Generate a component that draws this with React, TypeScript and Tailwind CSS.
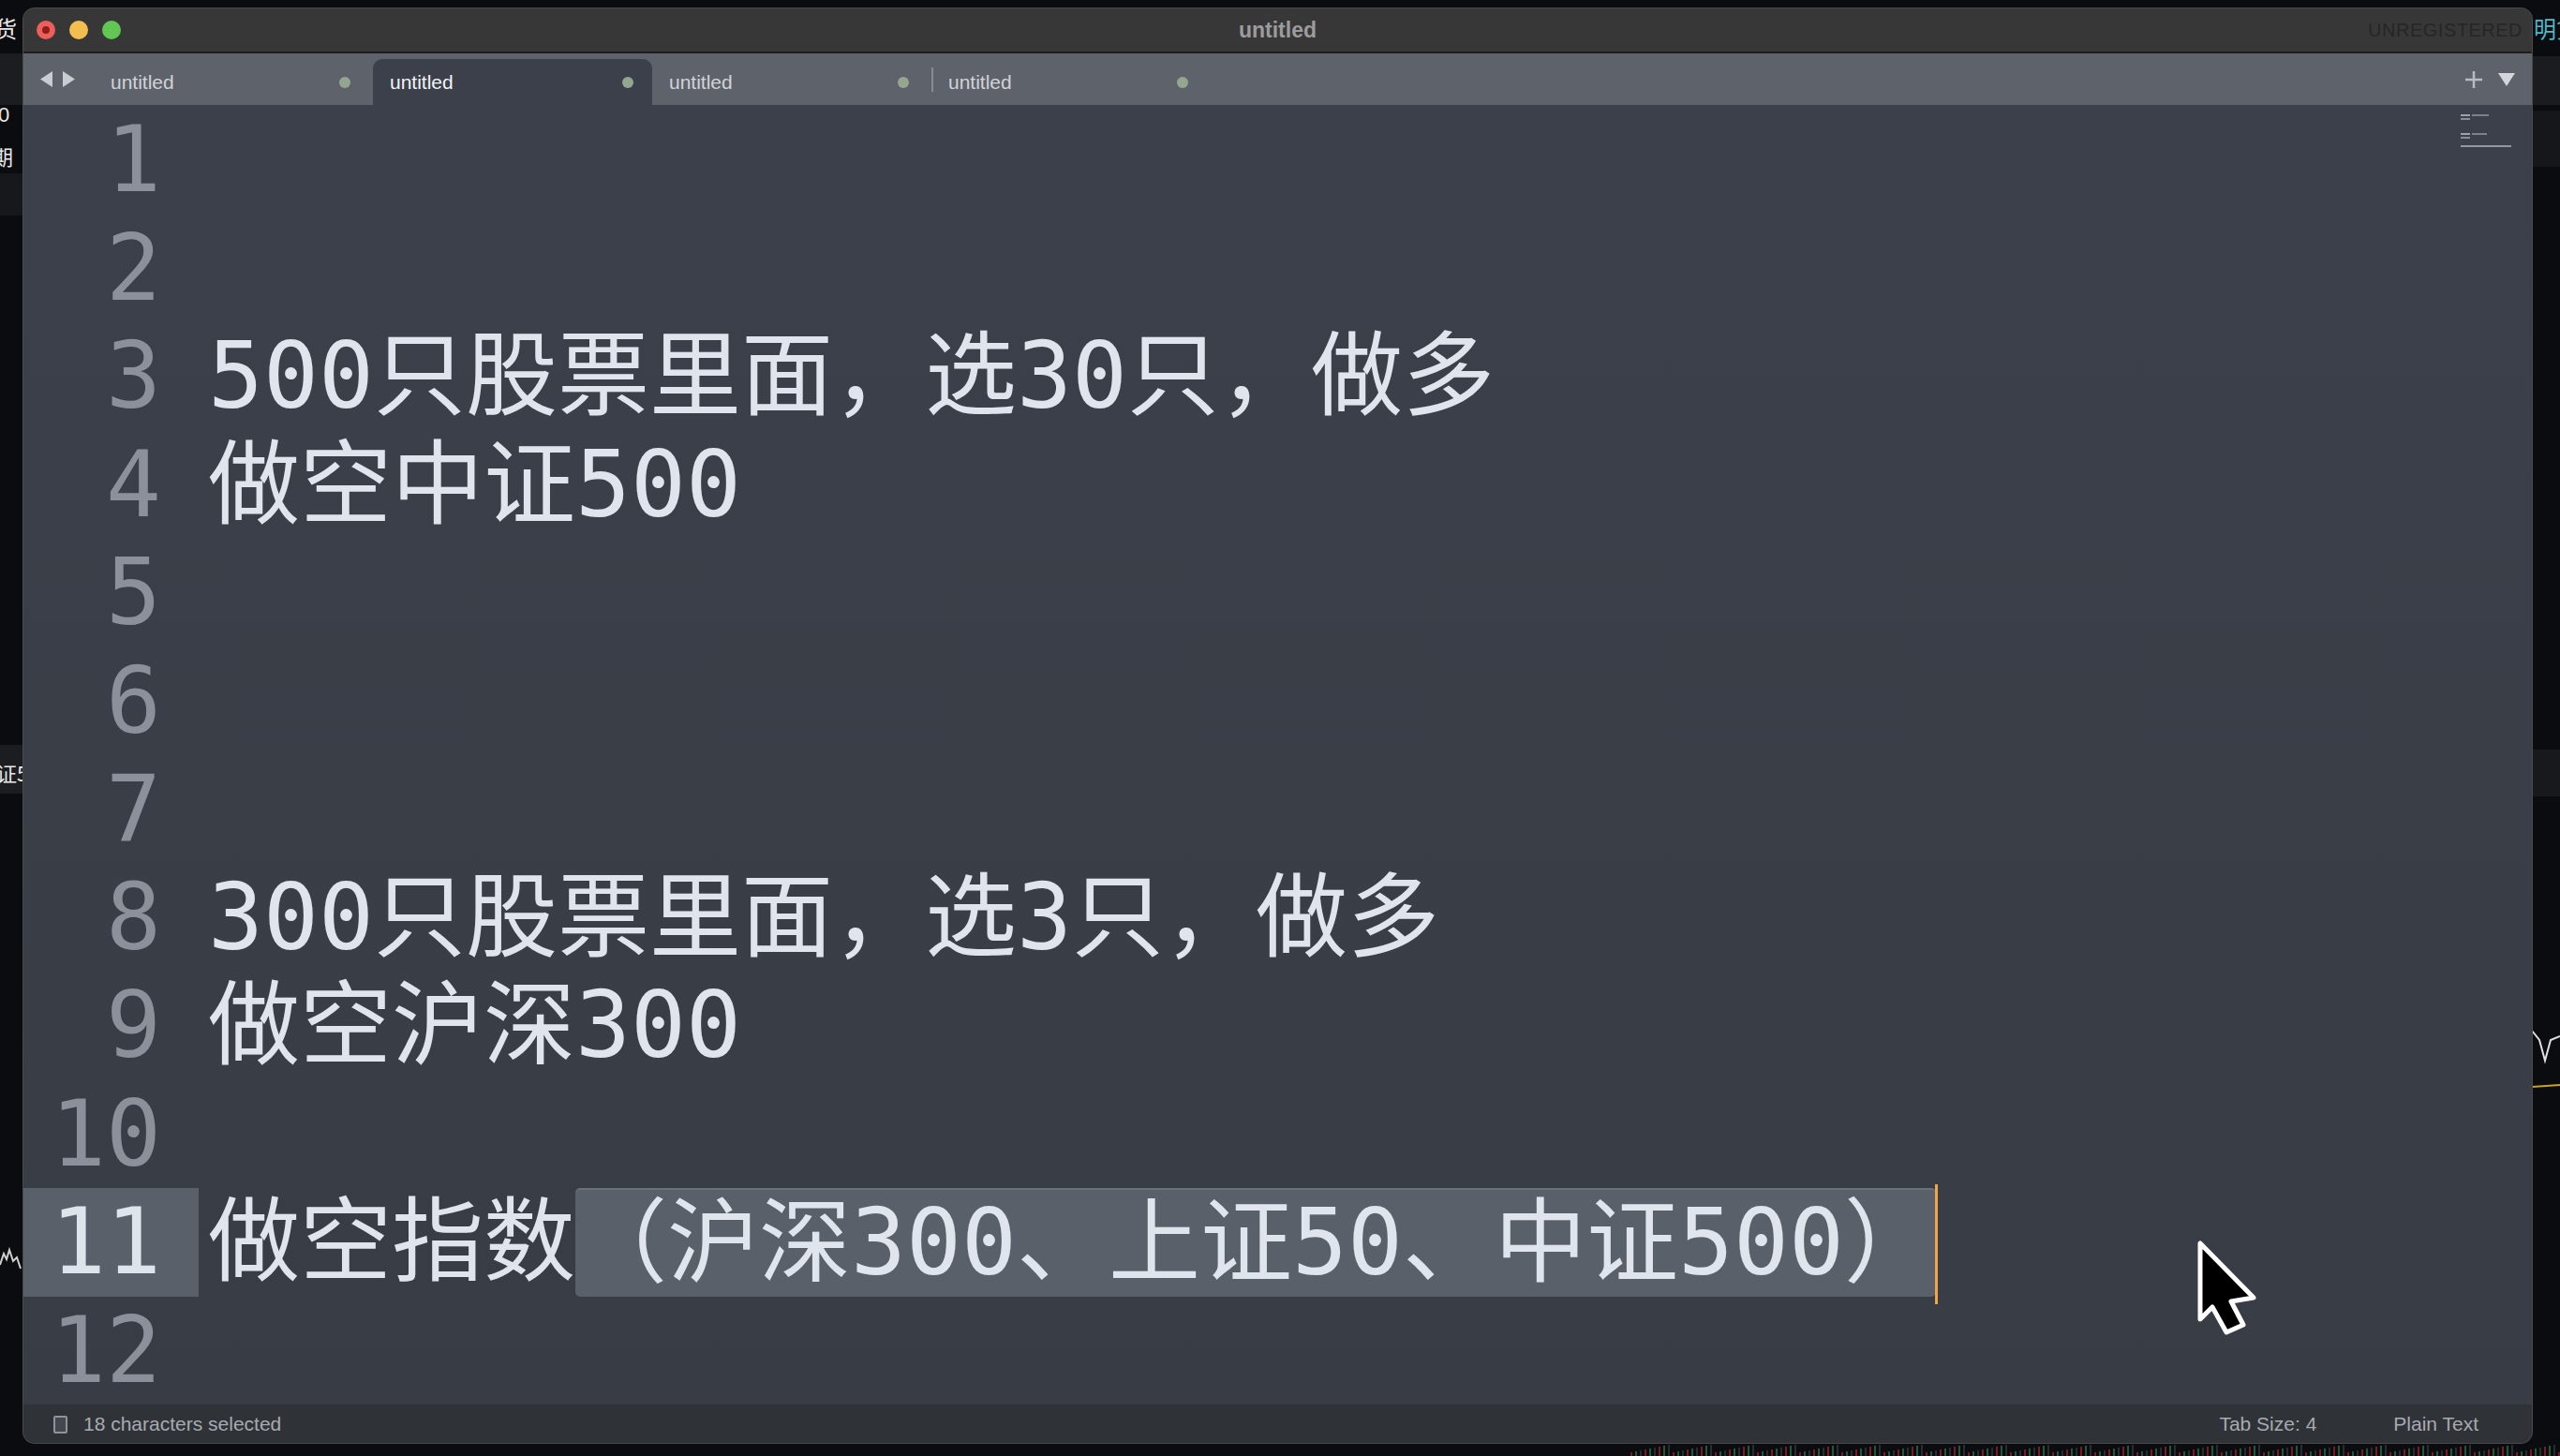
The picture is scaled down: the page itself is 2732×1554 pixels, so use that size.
import React from "react";

const mono = { fontFamily: '"DejaVu Sans Mono", "Noto Sans CJK SC", monospace' };
const ui = { fontFamily: '"Liberation Sans", Arial, "Noto Sans CJK SC", sans-serif' };
const cjk = { fontFamily: '"Noto Sans CJK SC", sans-serif' };

const lines: { n: number; text: string; sel?: string }[] = [
  { n: 1, text: "" },
  { n: 2, text: "" },
  { n: 3, text: "500只股票里面，选30只，做多" },
  { n: 4, text: "做空中证500" },
  { n: 5, text: "" },
  { n: 6, text: "" },
  { n: 7, text: "" },
  { n: 8, text: "300只股票里面，选3只，做多" },
  { n: 9, text: "做空沪深300" },
  { n: 10, text: "" },
  { n: 11, text: "做空指数", sel: "（沪深300、上证50、中证500）" },
  { n: 12, text: "" },
];

function Tab({ active, sep }: { active?: boolean; sep?: boolean }) {
  return (
    <div className="relative w-[298px] h-full flex items-end">
      {sep && <div className="absolute left-0 top-[15px] h-[26px] w-[2px] bg-[#868c94]" />}
      <div
        className={
          active
            ? "w-full h-[49px] bg-[#3b404a] rounded-t-[10px] flex items-center justify-between pl-[18px] pr-[20px]"
            : "w-full h-[49px] flex items-center justify-between pl-[18px] pr-[24px]"
        }
      >
        <span className={active ? "text-[21px] text-[#f2f4f7]" : "text-[21px] text-[#d0d3d8]"}>untitled</span>
        <span className="w-[12px] h-[12px] rounded-full bg-[#94a68f]" />
      </div>
    </div>
  );
}

export default function App() {
  return (
    <div className="relative w-[2732px] h-[1554px] overflow-hidden bg-[#0b0c0f]" style={ui}>
      {/* desktop content behind the window */}
      <div className="absolute left-0 top-[57px] w-[30px] h-[55px] bg-[#1b1d21]" />
      <div className="absolute left-0 top-[185px] w-[30px] h-[45px] bg-[#16181c]" />
      <div className="absolute left-[-6px] top-[12px] text-[24px] text-[#e8e8e8] whitespace-nowrap" style={cjk}>货</div>
      <div className="absolute left-[-2px] top-[106px] text-[22px] text-[#e8e8e8]">0</div>
      <div className="absolute left-[-8px] top-[150px] text-[22px] text-[#e8e8e8] whitespace-nowrap" style={cjk}>期</div>
      <div className="absolute left-0 top-[795px] w-[30px] h-[52px] bg-[#1b1d21]" />
      <div className="absolute left-[-4px] top-[808px] text-[22px] text-[#e8e8e8] whitespace-nowrap" style={cjk}>证5</div>
      <svg className="absolute left-0 top-[1320px]" width="26" height="40" viewBox="0 0 26 40">
        <path d="M0 30 L4 18 L7 24 L10 14 L14 26 L18 22 L22 34" stroke="#cfcfcf" strokeWidth="2" fill="none" />
      </svg>
      <div className="absolute left-[2702px] top-[60px] w-[30px] h-[52px] bg-[#1a1c20]" />
      <div className="absolute left-[2702px] top-[118px] w-[30px] h-[60px] bg-[#15171b]" />
      <div className="absolute left-[2704px] top-[12px] text-[24px] text-[#4fb8c8] whitespace-nowrap" style={cjk}>明货</div>
      <div className="absolute left-[2702px] top-[800px] w-[30px] h-[50px] bg-[#17191d]" />
      <svg className="absolute left-[2702px] top-[1080px]" width="30" height="90" viewBox="0 0 30 90">
        <path d="M0 20 L8 30 L14 52 L20 30 L30 26" stroke="#e0e0e0" strokeWidth="2" fill="none" />
        <path d="M0 80 L30 78" stroke="#c9a227" strokeWidth="2" fill="none" />
      </svg>
      <div className="absolute left-[1740px] top-[1542px] w-[1000px] h-[12px] flex items-end gap-[3px]">
        {Array.from({ length: 200 }).map((_, i) => (
          <div
            key={i}
            className="w-[2px]"
            style={{
              height: `${4 + ((i * 37) % 9)}px`,
              background: i % 3 === 0 ? "#7a1c22" : i % 3 === 1 ? "#1f5a3a" : "#2a2c30",
            }}
          />
        ))}
      </div>

      {/* window */}
      <div className="absolute left-[25px] top-[9px] w-[2677px] h-[1531px] rounded-[12px] overflow-hidden flex flex-col bg-[#3b404a] shadow-[0_0_0_1px_#4a4a4a]">
        {/* title bar */}
        <div className="relative h-[48px] shrink-0 bg-[#373737] border-b-2 border-[#1e1e1e] flex items-center">
          <div className="flex items-center gap-[15px] pl-[14px]">
            <span className="w-[20px] h-[20px] rounded-full bg-[#ec5f5a] flex items-center justify-center">
              <span className="w-[8px] h-[8px] rounded-full bg-[#8d1e1a]" />
            </span>
            <span className="w-[20px] h-[20px] rounded-full bg-[#f3be4f]" />
            <span className="w-[20px] h-[20px] rounded-full bg-[#62c655]" />
          </div>
          <div className="absolute inset-0 flex items-center justify-center pointer-events-none">
            <span className="text-[23px] font-bold text-[#9c9c9c]">untitled</span>
          </div>
          <div className="ml-auto pr-[10px] text-[20px] text-[#262626] tracking-[0.5px]">UNREGISTERED</div>
        </div>

        {/* tab bar */}
        <div className="h-[55px] shrink-0 bg-[#5e636b] flex items-stretch">
          <div className="w-[75px] flex items-center pl-[18px] gap-[11px]">
            <svg width="13" height="17" viewBox="0 0 13 17"><path d="M13 0 L0 8.5 L13 17 Z" fill="#c9ccd1" /></svg>
            <svg width="13" height="17" viewBox="0 0 13 17"><path d="M0 0 L13 8.5 L0 17 Z" fill="#c9ccd1" /></svg>
          </div>
          <Tab />
          <Tab active />
          <Tab />
          <Tab sep />
          <div className="ml-auto flex items-center gap-[16px] pr-[18px]">
            <svg width="20" height="20" viewBox="0 0 20 20"><path d="M10 1 V19 M1 10 H19" stroke="#b9bdc3" strokeWidth="2.5" /></svg>
            <svg width="18" height="14" viewBox="0 0 18 14"><path d="M0 0 H18 L9 14 Z" fill="#d3d6db" /></svg>
          </div>
        </div>

        {/* editor */}
        <div className="relative flex-1 bg-gradient-to-b from-[#3b404a] to-[#373c45] pt-[1px]" style={mono}>
          {lines.map((l) => {
            const cur = l.n === 11;
            return (
              <div key={l.n} className="flex h-[115.5px] items-stretch whitespace-pre">
                <div
                  className={
                    cur
                      ? "w-[187px] shrink-0 bg-[#59606a] text-right pr-[40px] text-[98px] leading-[115.5px] text-[#dfe3ea]"
                      : "w-[187px] shrink-0 text-right pr-[40px] text-[98px] leading-[115.5px] text-[#8b909a]"
                  }
                >
                  {l.n}
                </div>
                <div className="pl-[10px] text-[98px] leading-[115.5px] text-[#e0e4ec] flex items-stretch">
                  <span>{l.text}</span>
                  {l.sel && (
                    <span className="relative bg-[#5a606a] rounded-[5px] border-t-2 border-[#6b717b] leading-[113px]">
                      {l.sel}
                      <span className="absolute right-[-2px] top-[-6px] w-[3px] h-[128px] bg-[#f0a54a]" />
                    </span>
                  )}
                </div>
              </div>
            );
          })}

          {/* minimap */}
          <div className="absolute right-[22px] top-[10px] w-[54px] flex flex-col gap-[2px] opacity-80">
            <div className="flex gap-[2px]"><div className="w-[10px] h-[2px] bg-[#b5bac2]" /><div className="w-[18px] h-[2px] bg-[#8d939c]" /></div>
            <div className="w-[10px] h-[2px] bg-[#9ca1a9]" />
            <div className="h-[10px]" />
            <div className="flex gap-[2px]"><div className="w-[10px] h-[2px] bg-[#b5bac2]" /><div className="w-[16px] h-[2px] bg-[#8d939c]" /></div>
            <div className="w-[10px] h-[2px] bg-[#9ca1a9]" />
            <div className="h-[3px]" />
            <div className="w-[54px] h-[2px] bg-[#aab0b8]" />
          </div>

          {/* mouse cursor */}
          <svg className="absolute left-[2318px] top-[1210px]" width="70" height="105" viewBox="-5 -5 70 105">
            <path
              d="M0 0 L0 81 L13 68 L28 95 L46 87 L33 62 L57 58 Z"
              fill="#000"
              stroke="#fff"
              strokeWidth="5"
              strokeLinejoin="round"
            />
          </svg>
        </div>

        {/* status bar */}
        <div className="h-[42px] shrink-0 bg-[#2f3237] flex items-center">
          <div className="ml-[32px] w-[15px] h-[19px] border-2 border-[#8f939a] rounded-[2px] bg-[#44474d]" />
          <span className="ml-[17px] text-[21px] text-[#a7abb1]">18 characters selected</span>
          <span className="ml-auto text-[21px] text-[#a7abb1]">Tab Size: 4</span>
          <span className="ml-[82px] mr-[57px] text-[21px] text-[#a7abb1]">Plain Text</span>
        </div>
      </div>
    </div>
  );
}
